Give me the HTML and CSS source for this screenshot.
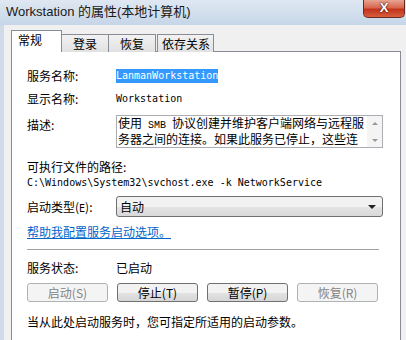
FILE: index.html
```html
<!DOCTYPE html>
<html lang="zh-CN">
<head>
<meta charset="utf-8">
<title>Workstation 的属性</title>
<link rel="stylesheet" href="styles.css">
</head>
<body>
<div class="window">
  <div class="titlebar">
    <span class="title">Workstation 的属性(本地计算机)</span>
    <span class="close">X</span>
  </div>
  <div class="client">
    <div class="tabs">
      <span class="tab active">常规</span>
      <span class="tab">登录</span>
      <span class="tab">恢复</span>
      <span class="tab">依存关系</span>
    </div>
    <div class="panel">
      <div class="row r-name">
        <span class="label">服务名称:</span>
        <span class="mono"><span class="sel">LanmanWorkstation</span></span>
      </div>
      <div class="row r-disp">
        <span class="label">显示名称:</span>
        <span class="mono">Workstation</span>
      </div>
      <div class="row r-desc">
        <span class="label desc-label">描述:</span>
        <div class="textbox">
          <div class="tb-text"><span class="line">使用<span class="mono-w"> SMB </span>协议创建并维护客户端网络与远程服</span><span class="line">务器之间的连接。如果此服务已停止，这些连</span></div>
          <div class="scroll">
            <span class="arr up"></span>
            <span class="arr down"></span>
          </div>
        </div>
      </div>
      <div class="path-label">可执行文件的路径:</div>
      <div class="mono path">C:\Windows\System32\svchost.exe -k NetworkService</div>
      <div class="row r-type">
        <span class="label">启动类型(<span class="mono-s">E</span>):</span>
        <div class="select"><span>自动</span><span class="caret"></span></div>
      </div>
      <div class="link">帮助我配置服务启动选项。</div>
      <div class="sep"></div>
      <div class="row r-status">
        <span class="label">服务状态:</span>
        <span>已启动</span>
      </div>
      <div class="buttons">
        <span class="btn disabled">启动(S)</span>
        <span class="btn">停止(T)</span>
        <span class="btn">暂停(P)</span>
        <span class="btn disabled">恢复(R)</span>
      </div>
      <div class="note">当从此处启动服务时，您可指定所适用的启动参数。</div>
    </div>
  </div>
</div>
</body>
</html>
```
FILE: styles.css
```css
html, body {
  margin: 0;
  padding: 0;
}
body {
  width: 406px;
  height: 340px;
  overflow: hidden;
  background: #cfdbe8;
  font-family: "Noto Sans CJK SC", "Liberation Sans", sans-serif;
  font-size: 12px;
  color: #000;
}
.window {
  display: flex;
  flex-direction: column;
  height: 340px;
}
.titlebar {
  height: 25px;
  display: flex;
  justify-content: space-between;
  align-items: flex-start;
  background: linear-gradient(#dfe8f2, #c6d6e8);
}
.title {
  margin: 4px 0 0 6px;
  font-family: "Liberation Sans", "Noto Sans CJK SC", sans-serif;
  font-size: 13px;
  line-height: 16px;
  color: #1a1a1a;
}
.close {
  width: 42px;
  height: 18px;
  margin-right: 1px;
  box-sizing: border-box;
  border: 1px solid #6b2a21;
  border-top: none;
  border-radius: 0 0 5px 5px;
  background: linear-gradient(#e8a493, #d8674f 45%, #c2341b 55%, #d75e3d);
  color: #fff;
  font-family: "Liberation Sans", sans-serif;
  font-weight: bold;
  font-size: 13px;
  line-height: 16px;
  text-align: center;
  text-shadow: 0 0 2px #4a1208, 0 0 1px #4a1208;
}
.client {
  flex: 1;
  margin-left: 4px;
  background: #f0f0f0;
  padding: 6px 5px 0 7px;
  display: flex;
  flex-direction: column;
}
.tabs {
  display: flex;
  align-items: flex-end;
  height: 21px;
  margin-bottom: -1px;
  position: relative;
  z-index: 1;
}
.tab {
  height: 18px;
  box-sizing: border-box;
  border: 1px solid #898c95;
  border-bottom: none;
  border-left: none;
  background: linear-gradient(#f2f2f2, #e1e1e1);
  padding: 0 4px;
  line-height: 18px;
  font-size: 12px;
  white-space: nowrap;
  text-align: center;
}
.tab:nth-child(2) { width: 47px; }
.tab:nth-child(3) { width: 47px; }
.tab:nth-child(4) { width: 57px; margin-left: 1px; border-left: 1px solid #898c95; }
.tab.active {
  height: 22px;
  width: 51px;
  border-left: 1px solid #898c95;
  background: #fff;
  line-height: 18px;
  text-align: left;
  padding-left: 6px;
}
.panel {
  flex: 1;
  background: #fff;
  border: 1px solid #898c95;
  border-bottom: none;
  padding: 0 0 0 15px;
}
.row {
  display: flex;
  align-items: center;
}
.label {
  width: 89px;
  flex-shrink: 0;
}
.mono, .mono-s {
  font-family: "DejaVu Sans Mono", "Liberation Mono", monospace;
  font-size: 10px;
}
.mono-w {
  font-family: "Liberation Mono", monospace;
  font-size: 10px;
  white-space: pre;
}
.r-name {
  margin-top: 16px;
  height: 15px;
}
.sel {
  background: #3399ff;
  color: #fff;
  padding: 1px 0 2px;
}
.r-disp {
  margin-top: 8px;
  height: 15px;
}
.r-desc {
  margin-top: 9px;
  align-items: flex-start;
}
.desc-label {
  margin-top: 1px;
}
.textbox {
  width: 267px;
  height: 33px;
  box-sizing: border-box;
  border: 1px solid #abadb3;
  display: flex;
}
.tb-text {
  flex: 1;
  min-width: 0;
  line-height: 13px;
  padding: 0 0 0 1px;
}
.line {
  display: block;
  white-space: nowrap;
}
.scroll {
  width: 15px;
  flex-shrink: 0;
  background: #f4f4f4;
  display: flex;
  flex-direction: column;
  justify-content: space-between;
  align-items: center;
  padding: 6px 0 5px;
}
.arr {
  width: 0;
  height: 0;
  border-left: 3px solid transparent;
  border-right: 3px solid transparent;
}
.arr.up { border-bottom: 3px solid #999; }
.arr.down { border-top: 3px solid #999; }
.path-label {
  margin-top: 11px;
  line-height: 15px;
}
.path {
  line-height: 14px;
  margin-top: 2px;
}
.r-type {
  margin-top: 6px;
}
.select {
  width: 267px;
  height: 21px;
  box-sizing: border-box;
  border: 1px solid #707070;
  border-radius: 3px;
  background: linear-gradient(#f2f2f2 50%, #e4e4e4 51%, #d9d9d9);
  display: flex;
  align-items: center;
  justify-content: space-between;
  padding: 0 6px 0 3px;
}
.caret {
  width: 0;
  height: 0;
  border-left: 4px solid transparent;
  border-right: 4px solid transparent;
  border-top: 4px solid #222;
}
.link {
  margin-top: 7px;
  color: #0066cc;
  text-decoration: underline;
  line-height: 16px;
}
.sep {
  width: 352px;
  height: 1px;
  background: #a0a0a0;
  border-bottom: 1px solid #fff;
  margin-top: 9px;
}
.r-status {
  margin-top: 8px;
  height: 16px;
}
.buttons {
  display: flex;
  gap: 9px;
  margin-top: 8px;
}
.btn {
  width: 81px;
  height: 19px;
  box-sizing: border-box;
  border: 1px solid #707070;
  border-radius: 3px;
  background: linear-gradient(#f2f2f2 50%, #e3e3e3 51%, #d6d6d6);
  text-align: center;
  line-height: 17px;
}
.btn.disabled {
  border-color: #adb2b5;
  background: #f4f4f4;
  color: #838383;
}
.note {
  margin-top: 12px;
  line-height: 16px;
}
```
